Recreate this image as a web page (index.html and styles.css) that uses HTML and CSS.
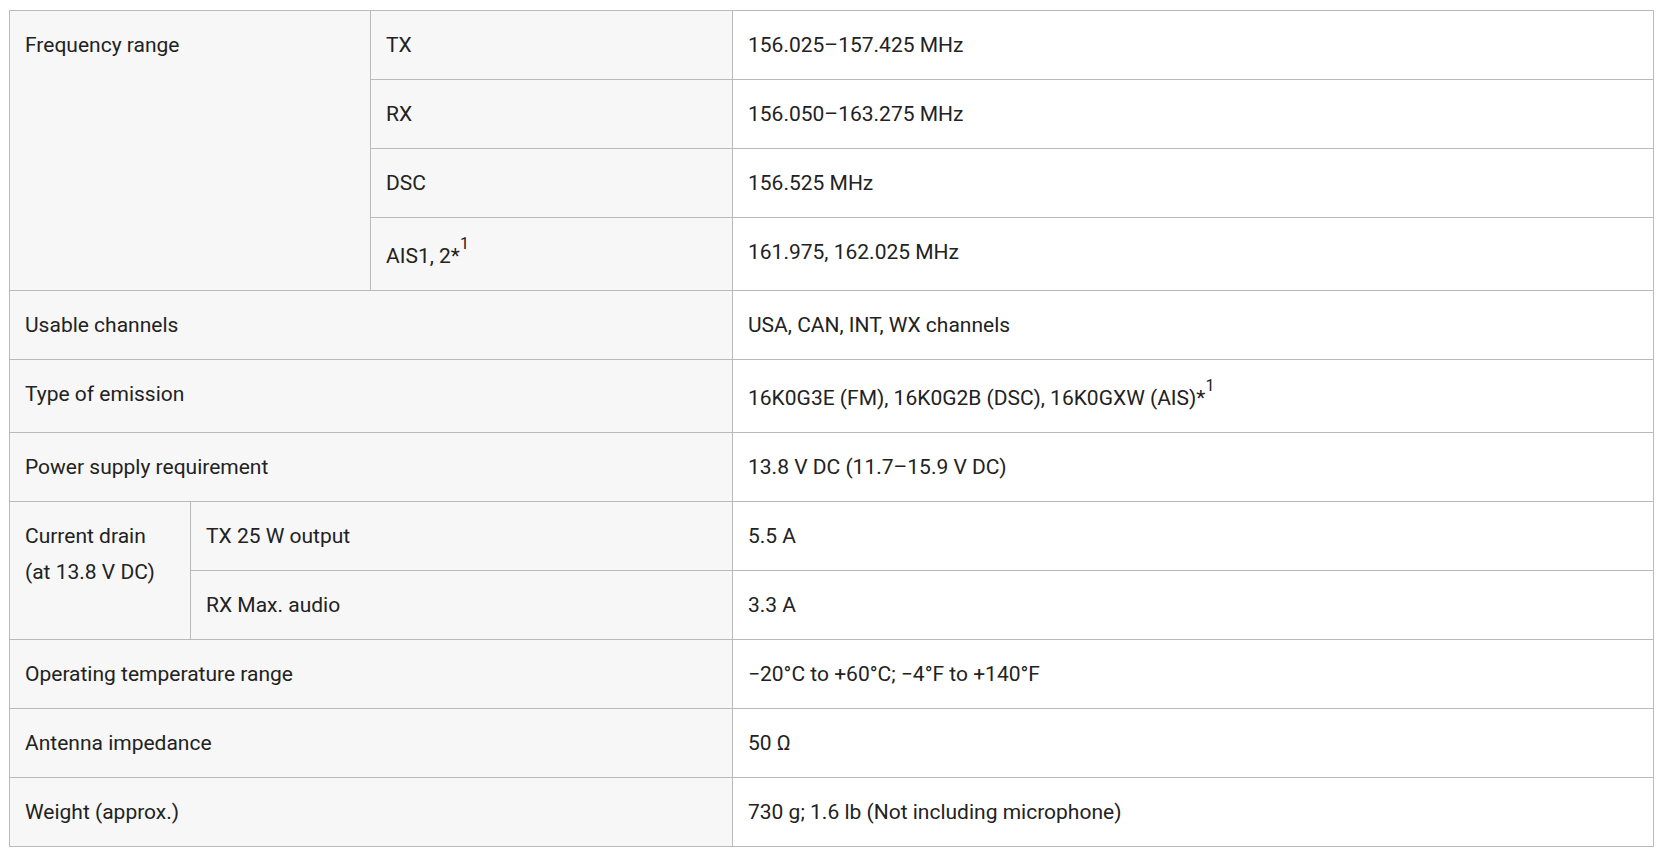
FILE: index.html
```html
<!DOCTYPE html>
<html>
<head>
<meta charset="utf-8">
<link rel="stylesheet" href="styles.css">
</head>
<body>
<table class="spec">
  <colgroup>
    <col class="c1"><col class="c2"><col class="c3"><col class="c4">
  </colgroup>
  <tbody>
    <tr>
      <th colspan="2" rowspan="4">Frequency range</th>
      <th>TX</th>
      <td>156.025–157.425 MHz</td>
    </tr>
    <tr><th>RX</th><td>156.050–163.275 MHz</td></tr>
    <tr><th>DSC</th><td>156.525 MHz</td></tr>
    <tr><th>AIS1, 2*<sup>1</sup></th><td>161.975, 162.025 MHz</td></tr>
    <tr><th colspan="3">Usable channels</th><td>USA, CAN, INT, WX channels</td></tr>
    <tr><th colspan="3">Type of emission</th><td>16K0G3E (FM), 16K0G2B (DSC), 16K0GXW (AIS)*<sup>1</sup></td></tr>
    <tr><th colspan="3">Power supply requirement</th><td>13.8 V DC (11.7–15.9 V DC)</td></tr>
    <tr>
      <th rowspan="2">Current drain<br>(at 13.8 V DC)</th>
      <th colspan="2">TX 25 W output</th>
      <td>5.5 A</td>
    </tr>
    <tr><th colspan="2">RX Max. audio</th><td>3.3 A</td></tr>
    <tr><th colspan="3">Operating temperature range</th><td>−20°C to +60°C; −4°F to +140°F</td></tr>
    <tr><th colspan="3">Antenna impedance</th><td>50 Ω</td></tr>
    <tr><th colspan="3">Weight (approx.)</th><td>730 g; 1.6 lb (Not including microphone)</td></tr>
  </tbody>
</table>
</body>
</html>
```
FILE: styles.css
```css
html, body {
  margin: 0;
  padding: 0;
  background: #ffffff;
}
body {
  padding: 10px 11px 0 9px;
  font-family: Roboto, "Liberation Sans", sans-serif;
  color: #222222;
}
.spec {
  width: 1644px;
  border-collapse: collapse;
  table-layout: fixed;
  font-size: 21px;
  line-height: 36px;
}
.c1 { width: 181px; }
.c2 { width: 180px; }
.c3 { width: 362px; }
.c4 { width: 921px; }
.spec th,
.spec td {
  border: 1px solid #bababa;
  padding: 16px 15px;
  text-align: left;
  vertical-align: top;
  font-weight: 400;
}
.spec th {
  background: #f7f7f7;
}
.spec td {
  background: #ffffff;
}
.spec sup {
  font-size: 16px;
  line-height: normal;
  vertical-align: 14px;
}
```
